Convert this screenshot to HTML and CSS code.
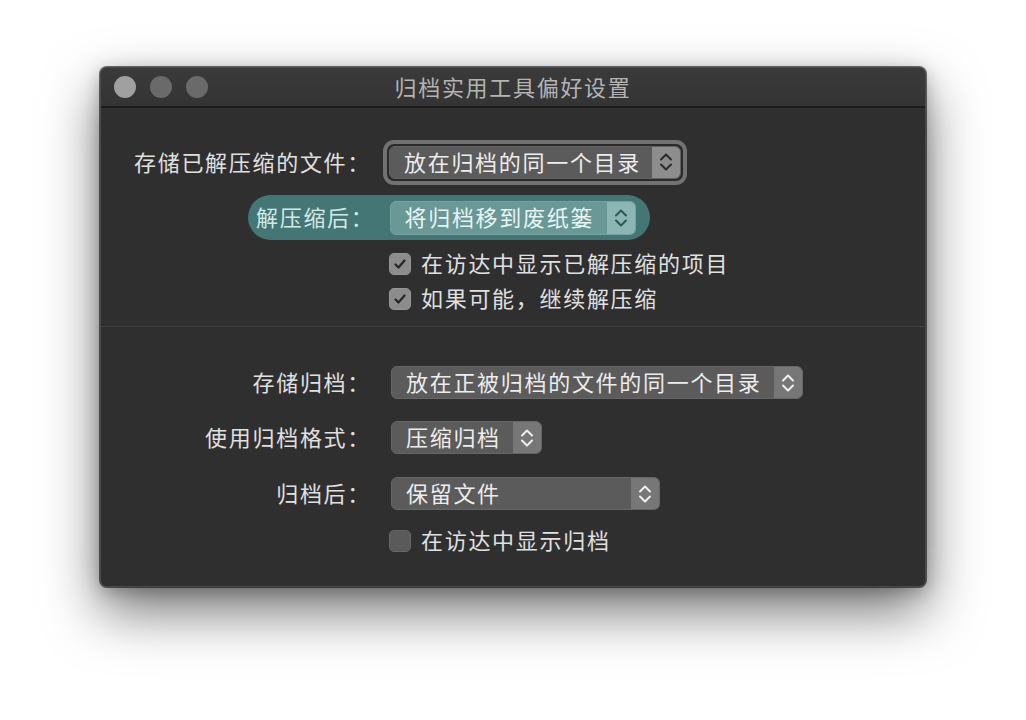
FILE: index.html
```html
<!DOCTYPE html>
<html lang="zh-CN">
<head>
<meta charset="utf-8">
<title>归档实用工具偏好设置</title>
<link rel="stylesheet" href="styles.css">
</head>
<body>
<div class="window">
  <div class="titlebar">
    <div class="lights">
      <span class="light light-close"></span>
      <span class="light"></span>
      <span class="light"></span>
    </div>
    <div class="title">归档实用工具偏好设置</div>
    <div></div>
  </div>
  <div class="content">
    <div class="row row-first">
      <div class="label">存储已解压缩的文件：</div>
      <div class="focus-ring">
        <div class="popup popup-focused w-292">
          <span class="popup-text">放在归档的同一个目录</span>
          <span class="stepper"><svg width="16" height="26" viewBox="0 0 16 26"><path d="M3 10.5 L8 5.5 L13 10.5 M3 15.5 L8 20.5 L13 15.5" fill="none" stroke="currentColor" stroke-width="2" stroke-linecap="round" stroke-linejoin="round"/></svg></span>
        </div>
      </div>
    </div>

    <div class="row row-teal">
      <div class="teal">
        <div class="label label-teal">解压缩后：</div>
        <div class="popup popup-teal w-246">
          <span class="popup-text">将归档移到废纸篓</span>
          <span class="stepper"><svg width="16" height="26" viewBox="0 0 16 26"><path d="M3 10.5 L8 5.5 L13 10.5 M3 15.5 L8 20.5 L13 15.5" fill="none" stroke="currentColor" stroke-width="2" stroke-linecap="round" stroke-linejoin="round"/></svg></span>
        </div>
      </div>
    </div>

    <div class="check-row check-1">
      <span class="checkbox checked"><svg width="16" height="16" viewBox="0 0 16 16"><path d="M3.5 8.5 L6.5 11.5 L12.5 4.5" fill="none" stroke="currentColor" stroke-width="2.2" stroke-linecap="round" stroke-linejoin="round"/></svg></span>
      <span class="check-text">在访达中显示已解压缩的项目</span>
    </div>
    <div class="check-row check-2">
      <span class="checkbox checked"><svg width="16" height="16" viewBox="0 0 16 16"><path d="M3.5 8.5 L6.5 11.5 L12.5 4.5" fill="none" stroke="currentColor" stroke-width="2.2" stroke-linecap="round" stroke-linejoin="round"/></svg></span>
      <span class="check-text">如果可能，继续解压缩</span>
    </div>

    <div class="divider"></div>

    <div class="row row-4">
      <div class="label">存储归档：</div>
      <div class="popup w-412">
        <span class="popup-text">放在正被归档的文件的同一个目录</span>
        <span class="stepper"><svg width="16" height="26" viewBox="0 0 16 26"><path d="M3 10.5 L8 5.5 L13 10.5 M3 15.5 L8 20.5 L13 15.5" fill="none" stroke="currentColor" stroke-width="2" stroke-linecap="round" stroke-linejoin="round"/></svg></span>
      </div>
    </div>
    <div class="row row-5">
      <div class="label">使用归档格式：</div>
      <div class="popup w-151">
        <span class="popup-text">压缩归档</span>
        <span class="stepper"><svg width="16" height="26" viewBox="0 0 16 26"><path d="M3 10.5 L8 5.5 L13 10.5 M3 15.5 L8 20.5 L13 15.5" fill="none" stroke="currentColor" stroke-width="2" stroke-linecap="round" stroke-linejoin="round"/></svg></span>
      </div>
    </div>
    <div class="row row-6">
      <div class="label">归档后：</div>
      <div class="popup w-269">
        <span class="popup-text">保留文件</span>
        <span class="stepper"><svg width="16" height="26" viewBox="0 0 16 26"><path d="M3 10.5 L8 5.5 L13 10.5 M3 15.5 L8 20.5 L13 15.5" fill="none" stroke="currentColor" stroke-width="2" stroke-linecap="round" stroke-linejoin="round"/></svg></span>
      </div>
    </div>
    <div class="check-row check-3">
      <span class="checkbox"></span>
      <span class="check-text">在访达中显示归档</span>
    </div>
  </div>
</div>
</body>
</html>
```

FILE: styles.css
```css
html, body {
  margin: 0;
  padding: 0;
  background: #ffffff;
}

body {
  width: 1026px;
  height: 720px;
  overflow: hidden;
  font-family: "Noto Sans CJK SC", "Noto Sans", sans-serif;
  font-size: 22px;
  letter-spacing: 1.7px;
}

.window {
  box-sizing: border-box;
  margin: 67px 0 0 100px;
  width: 826px;
  height: 520px;
  background: #2f2f2f;
  border: 1px solid #4a4a4a;
  border-radius: 7px;
  box-shadow: 0 0 0 1px rgba(0, 0, 0, 0.55), 0 24px 55px rgba(0, 0, 0, 0.55), 0 4px 18px rgba(0, 0, 0, 0.25);
  overflow: hidden;
}

.titlebar {
  height: 38px;
  display: grid;
  grid-template-columns: 1fr auto 1fr;
  align-items: center;
  background: linear-gradient(#3a3a3a, #343434);
  border-bottom: 2px solid #1c1c1c;
}

.lights {
  display: flex;
  gap: 14px;
  padding-left: 13px;
}

.light {
  width: 22px;
  height: 22px;
  border-radius: 50%;
  background: #6a6a6a;
}

.light-close {
  background: #a0a0a0;
}

.title {
  color: #b4b4b4;
  line-height: 1;
  padding-bottom: 2px;
}

.content {
  padding-top: 30px;
  color: #e0e0e0;
}

.row {
  display: flex;
  align-items: center;
}

.label {
  width: 270px;
  text-align: right;
  white-space: nowrap;
  flex-shrink: 0;
  line-height: 1;
  padding-bottom: 3px;
}

.row-first {
  height: 48px;
}

.focus-ring {
  margin-left: 12px;
  border: 4px solid #727272;
  border-radius: 11px;
  padding: 2px;
  background: #2b2b2b;
}

.popup {
  box-sizing: border-box;
  height: 33px;
  display: flex;
  align-items: stretch;
  background: #5b5b5b;
  border: 1px solid #666666;
  border-radius: 6px;
  overflow: hidden;
  color: #ededed;
}

.row > .popup {
  margin-left: 20px;
}

.popup-text {
  flex: 1;
  padding-left: 14px;
  padding-bottom: 3px;
  display: flex;
  align-items: center;
  white-space: nowrap;
  line-height: 1;
}

.stepper {
  width: 28px;
  display: flex;
  align-items: center;
  justify-content: center;
  background: #777777;
  color: #efefef;
  letter-spacing: 0;
}

.popup-focused {
  border-color: #626262;
}

.popup-focused .stepper {
  background: #8d8d8d;
  color: #2a2a2a;
}

.w-292 { width: 292px; }
.w-246 { width: 246px; }
.w-412 { width: 412px; }
.w-151 { width: 151px; }
.w-269 { width: 269px; }

.row-teal {
  margin-top: 9px;
}

.teal {
  margin-left: 147px;
  height: 45px;
  display: flex;
  align-items: center;
  padding: 0 14px 0 8px;
  background: #437675;
  border-radius: 23px;
}

.label-teal {
  width: auto;
  color: #d3e9e7;
}

.popup-teal {
  height: 34px;
  margin-left: 15px;
  background: #6a9896;
  border-color: #75a3a1;
  color: #e8f4f3;
}

.popup-teal .stepper {
  background: #8bb6b3;
  color: #2d5654;
}

.check-row {
  display: flex;
  align-items: center;
  height: 22px;
  padding-left: 288px;
}

.check-1 { margin-top: 13px; }
.check-2 { margin-top: 13px; }
.check-3 { margin-top: 20px; }

.checkbox {
  box-sizing: border-box;
  width: 22px;
  height: 22px;
  border-radius: 5px;
  background: #5a5a5a;
  border: 1px solid #666666;
  display: flex;
  align-items: center;
  justify-content: center;
  flex-shrink: 0;
}

.checkbox.checked {
  background: #8c8c8c;
  border-color: #959595;
  color: #262626;
}

.check-text {
  margin-left: 10px;
  white-space: nowrap;
  line-height: 1;
  padding-bottom: 4px;
}

.divider {
  margin-top: 16px;
  height: 1px;
  background: #404040;
}

.row-4 { margin-top: 39px; }
.row-5 { margin-top: 22px; }
.row-6 { margin-top: 23px; }
```
